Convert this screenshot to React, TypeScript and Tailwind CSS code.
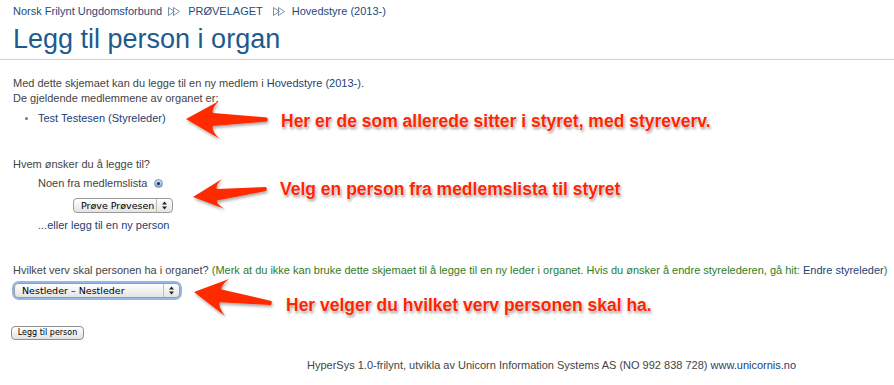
import React from 'react';

/* ── Small drawings ─────────────────────────────────────────────────── */
function CrumbSep({ className = '' }: { className?: string }) {
  return (
    <svg width="13" height="9" viewBox="0 0 13 9" className={className}>
      <polygon points="0.5,0.5 6.5,4.5 0.5,8.5" fill="none" stroke="#7d8fa8" strokeWidth="1" />
      <polygon points="5.5,0.5 11.5,4.5 5.5,8.5" fill="none" stroke="#7d8fa8" strokeWidth="1" />
    </svg>
  );
}

function UpDown() {
  return (
    <svg width="5" height="9" viewBox="0 0 5 9">
      <polygon points="2.5,0.5 5,3.5 0,3.5" fill="#222" />
      <polygon points="0,5.5 5,5.5 2.5,8.5" fill="#222" />
    </svg>
  );
}

function MacSelect({ label, width }: { label: string; width: string }) {
  return (
    <div
      className={`flex h-[15px] ${width} items-center rounded-[4px] border border-[#9b9b9b] bg-linear-to-b from-white to-[#e4e4e4] text-[9.5px] leading-none text-black font-['DejaVu_Sans',sans-serif]`}
    >
      <span className="flex-1 pl-[7px] whitespace-nowrap">{label}</span>
      <span className="flex h-full w-[16px] items-center justify-center border-l border-[#bdbdbd]">
        <UpDown />
      </span>
    </div>
  );
}

function Annotation({ text, className }: { text: string; className: string }) {
  return (
    <div
      className={`absolute whitespace-nowrap text-[17.5px] font-bold leading-[17px] text-[#ff2400] [text-shadow:0_0_1px_#fff,0_0_2px_#fff,1px_2px_3px_rgba(0,0,0,0.45)] ${className}`}
    >
      {text}
    </div>
  );
}

/* ── Page ───────────────────────────────────────────────────────────── */
export default function App() {
  return (
    <div className="relative h-[385px] w-[894px] overflow-hidden bg-white font-['Liberation_Sans',Arial,sans-serif] text-[11px] leading-[15px] text-[#444]">
      {/* Breadcrumb */}
      <div className="flex items-center pl-[13px] pt-[4px] text-[#1e4a7c]">
        <span>Norsk Frilynt Ungdomsforbund</span>
        <CrumbSep className="ml-[6px] mr-[7px]" />
        <span>PRØVELAGET</span>
        <CrumbSep className="ml-[10px] mr-[6px]" />
        <span>Hovedstyre (2013-)</span>
      </div>

      <h1 className="mt-[4px] h-[32px] pl-[13px] text-[27px] leading-[32px] text-[#1d5b8f]">Legg til person i organ</h1>
      <div className="mt-[4px] h-px bg-[#d2d2d2]" />

      <div className="pl-[13px]">
        <p className="mt-[16px]">
          Med dette skjemaet kan du legge til en ny medlem i <span className="text-[#1b3f73]">Hovedstyre (2013-)</span>.
        </p>
        <p>De gjeldende medlemmene av organet er:</p>
        <ul className="mt-[5px]">
          <li className="flex items-center">
            <span className="ml-[12px] mr-[10px] h-[3px] w-[3px] rounded-full bg-[#777]" />
            <span className="text-[#1b3f73]">Test Testesen (Styreleder)</span>
          </li>
        </ul>

        <p className="mt-[31px]">Hvem ønsker du å legge til?</p>
        <div className="mt-[4px] flex items-center pl-[25px]">
          <span>Noen fra medlemslista</span>
          <span className="ml-[7px] flex h-[9px] w-[9px] items-center justify-center rounded-full border border-[#7891b5] bg-linear-to-b from-[#d6e4f7] to-[#7fa6dc]">
            <span className="h-[3px] w-[3px] rounded-full bg-[#1c2f4d]" />
          </span>
        </div>
        <div className="mt-[7px] pl-[60px]">
          <MacSelect label="Prøve Prøvesen" width="w-[100px]" />
        </div>
        <p className="mt-[5px] pl-[25px] text-[#1b3f73]">...eller legg til en ny person</p>

        <p className="mt-[30px] whitespace-nowrap">
          Hvilket verv skal personen ha i organet?{' '}
          <span className="text-[#2f7d1c]">
            (Merk at du ikke kan bruke dette skjemaet til å legge til en ny leder i organet. Hvis du ønsker å endre
            styrelederen, gå hit: <span className="text-[#1b3f73]">Endre styreleder</span>)
          </span>
        </p>
        <div className="mt-[5px] ml-[1px] w-fit rounded-[5px] shadow-[0_0_0_2px_#93b8e6]">
          <MacSelect label="Nestleder – Nestleder" width="w-[166px]" />
        </div>

        <button className="mt-[28px] -ml-[2px] flex h-[14px] w-[73px] items-center justify-center rounded-[4px] border border-[#8f8f8f] bg-linear-to-b from-white to-[#e2e2e2] text-[8px] leading-none text-black font-['DejaVu_Sans',sans-serif]">
          Legg til person
        </button>
      </div>

      <p className="mt-[18px] pl-[307px] whitespace-nowrap">
        HyperSys 1.0-frilynt, utvikla av Unicorn Information Systems AS (NO 992 838 728){' '}
        <span className="text-[#1b3f73]">www.unicornis.no</span>
      </p>

      {/* Annotation arrows (drawn over the page) */}
      <svg className="pointer-events-none absolute left-0 top-0" width="894" height="385">
        <defs>
          <filter id="arrowShadow" x="-20%" y="-20%" width="140%" height="160%">
            <feDropShadow dx="1" dy="2" stdDeviation="1.5" floodColor="#000" floodOpacity="0.35" />
          </filter>
        </defs>
        <g fill="#ff2a00" filter="url(#arrowShadow)">
          <path d="M186,119 L219,101 Q211,109 213,113 L267,117.5 Q268.5,119.5 267,121.5 L213,126 Q211,131 220,139 Z" />
          <path d="M193,197 L222,179 Q215,186 217,189 L266,187 Q267.5,189 266,191 L217,200.5 Q216,204 225,209 Z" />
          <path d="M194,292 L229,279 Q220,286 221.6,289.4 L271.3,301 Q272.5,303 270.7,305 L219.8,302.2 Q218,307 225,316 Z" />
        </g>
      </svg>

      <Annotation text="Her er de som allerede sitter i styret, med styreverv." className="left-[281px] top-[113px]" />
      <Annotation text="Velg en person fra medlemslista til styret" className="left-[280px] top-[181px]" />
      <Annotation text="Her velger du hvilket verv personen skal ha." className="left-[286px] top-[297px]" />
    </div>
  );
}
